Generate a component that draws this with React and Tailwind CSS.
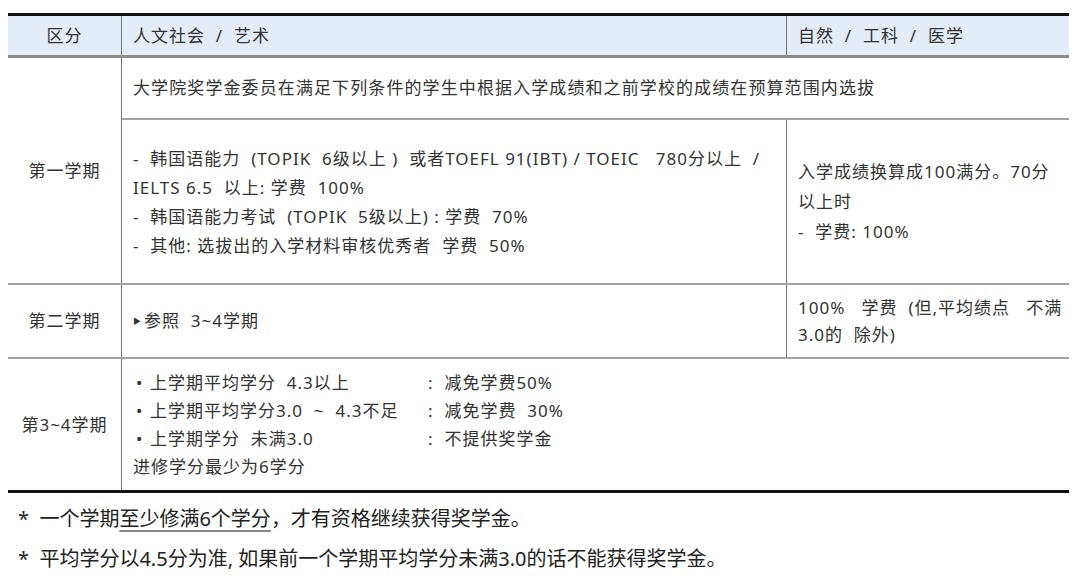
import React from "react";

const font = { fontFamily: "'Noto Sans', 'Noto Sans CJK SC', sans-serif" };

export default function App() {
  return (
    <div className="w-[1080px] h-[579px] bg-white text-[#333] pt-[13px] pl-[8px]" style={font}>
      <div className="w-[1061px] border-t-[3px] border-[#111]">
        {/* header */}
        <div className="flex h-[42px] bg-[#e4ecf7] border-b-[3px] border-[#8c8c8c] text-[17px] tracking-[1px]">
          <div className="w-[113px] flex items-center justify-center">区分</div>
          <div className="w-[665px] border-l border-[#777] flex items-center pl-[11px] whitespace-pre">人文社会  /  艺术</div>
          <div className="flex-1 border-l border-[#777] flex items-center pl-[11px] whitespace-pre">自然  /  工科  /  医学</div>
        </div>

        {/* row 1 */}
        <div className="flex h-[225px] text-[17px] tracking-[1px]">
          <div className="w-[113px] flex items-center justify-center">第一学期</div>
          <div className="flex-1 border-l border-[#777] flex flex-col">
            <div className="h-[60px] flex items-center pl-[11px] tracking-[1.1px]">
              大学院奖学金委员在满足下列条件的学生中根据入学成绩和之前学校的成绩在预算范围内选拔
            </div>
            <div className="flex-1 flex border-t-2 border-[#a3a3a3]">
              <div className="w-[664px] flex items-center pl-[11px] leading-[29px] whitespace-pre">
                <div>
                  <div>-  韩国语能力  (TOPIK  6级以上 )  或者TOEFL 91(IBT) / TOEIC   780分以上  /</div>
                  <div>IELTS 6.5  以上: 学费  100%</div>
                  <div>-  韩国语能力考试  (TOPIK  5级以上) : 学费  70%</div>
                  <div>-  其他: 选拔出的入学材料审核优秀者  学费  50%</div>
                </div>
              </div>
              <div className="flex-1 border-l border-[#777] flex items-center pl-[11px] leading-[30px] whitespace-pre">
                <div>
                  <div>入学成绩换算成100满分。70分</div>
                  <div>以上时</div>
                  <div>-  学费: 100%</div>
                </div>
              </div>
            </div>
          </div>
        </div>

        {/* row 2 */}
        <div className="flex h-[74px] border-t-2 border-[#a3a3a3] text-[17px] tracking-[1px]">
          <div className="w-[113px] flex items-center justify-center">第二学期</div>
          <div className="w-[665px] border-l border-[#777] flex items-center pl-[11px] whitespace-pre">
            <span className="text-[8px] mr-[2px]">▶</span>参照  3~4学期
          </div>
          <div className="flex-1 border-l border-[#777] flex items-center pl-[11px] leading-[27px] whitespace-pre">
            <div>
              <div>100%   学费  (但,平均绩点   不满</div>
              <div>3.0的  除外)</div>
            </div>
          </div>
        </div>

        {/* row 3 */}
        <div className="flex h-[133px] border-t-2 border-[#a3a3a3] text-[17px] tracking-[1px]">
          <div className="w-[113px] flex items-center justify-center">第3~4学期</div>
          <div className="flex-1 border-l border-[#777] flex items-center pl-[11px] leading-[28px] whitespace-pre">
            <div>
              <div className="flex">
                <div className="w-[295px] flex"><span className="w-[17px] pl-[3px]">•</span>上学期平均学分  4.3以上</div>
                <div>:  减免学费50%</div>
              </div>
              <div className="flex">
                <div className="w-[295px] flex"><span className="w-[17px] pl-[3px]">•</span>上学期平均学分3.0  ~  4.3不足</div>
                <div>:  减免学费  30%</div>
              </div>
              <div className="flex">
                <div className="w-[295px] flex"><span className="w-[17px] pl-[3px]">•</span>上学期学分  未满3.0</div>
                <div>:  不提供奖学金</div>
              </div>
              <div>进修学分最少为6学分</div>
            </div>
          </div>
        </div>

        <div className="border-t-[3px] border-[#111]" />
      </div>

      {/* footnotes */}
      <div className="pt-[6px] pl-[10px] text-[20px] leading-[40px] text-[#222]">
        <div>
          *&nbsp; 一个学期<span className="underline decoration-[#888] underline-offset-4">至少修满6个学分</span>，才有资格继续获得奖学金。
        </div>
        <div>*&nbsp; 平均学分以4.5分为准, 如果前一个学期平均学分未满3.0的话不能获得奖学金。</div>
      </div>
    </div>
  );
}
